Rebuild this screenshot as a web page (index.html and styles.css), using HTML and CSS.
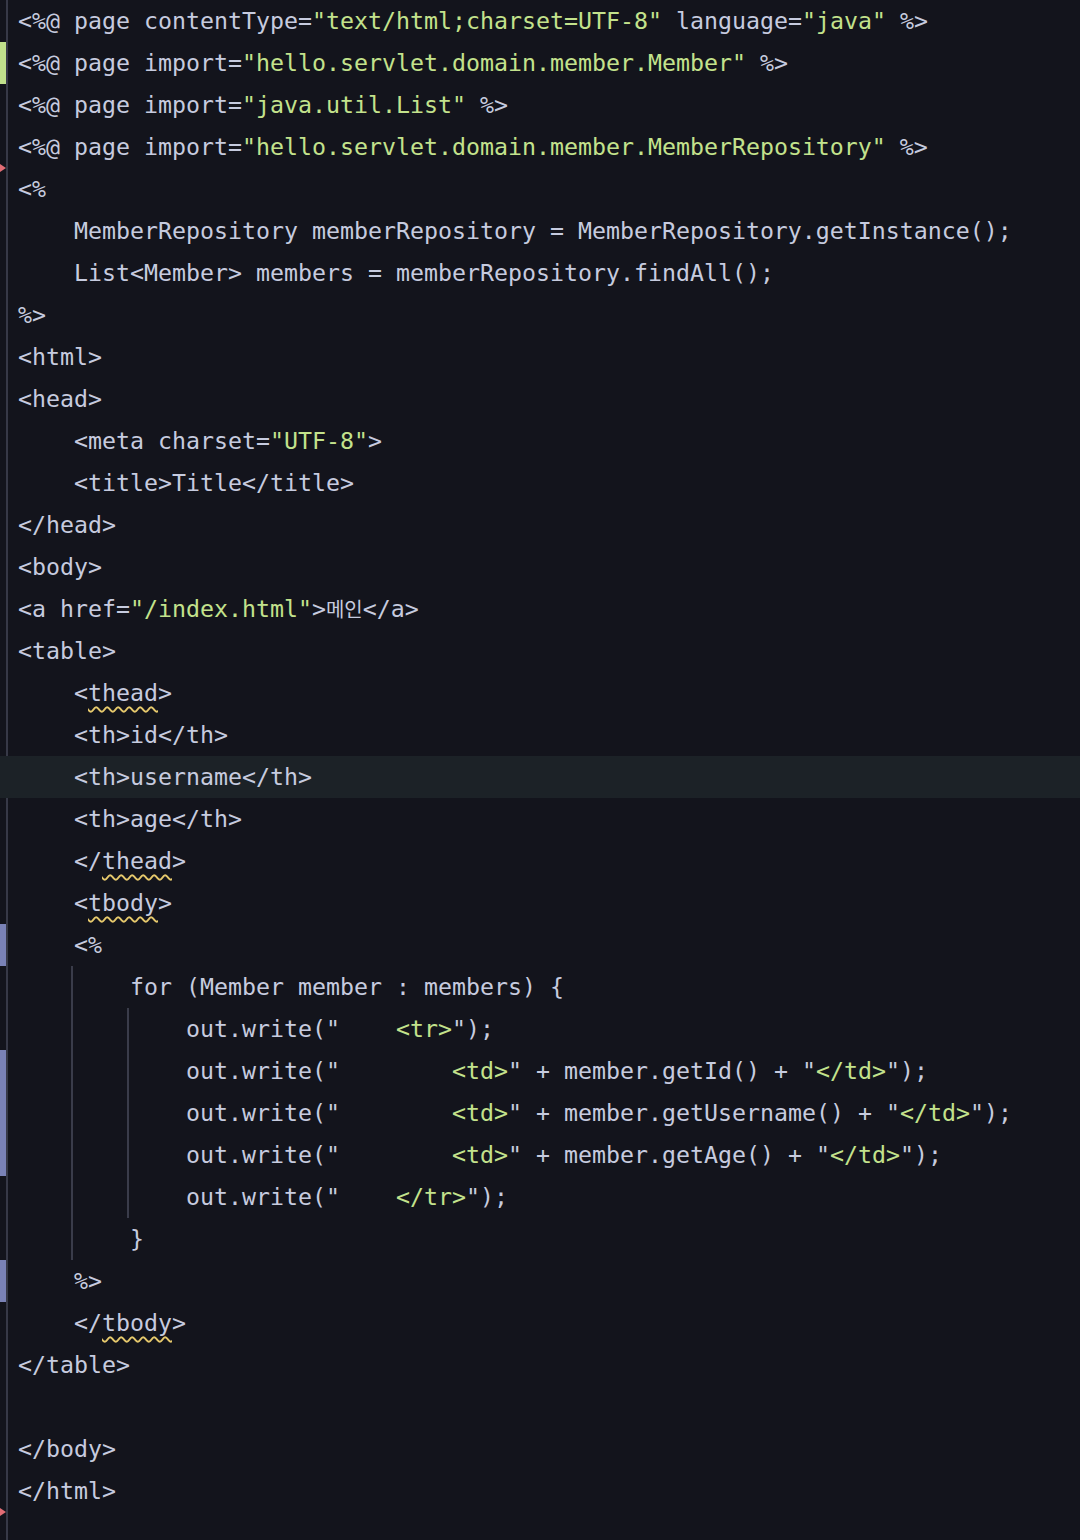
FILE: index.html
```html
<!DOCTYPE html>
<html lang="en">
<head>
<meta charset="UTF-8">
<title>JSP editor</title>
<link rel="stylesheet" href="styles.css">
</head>
<body>
<div class="editor">
<div class="line"><span class="mark"></span><span class="code">&lt;%@ page contentType=<span class="s">"text/html;charset=UTF-8"</span> language=<span class="s">"java"</span> %&gt;</span></div>
<div class="line"><span class="mark add"></span><span class="code">&lt;%@ page import=<span class="s">"hello.servlet.domain.member.Member"</span> %&gt;</span></div>
<div class="line"><span class="mark"></span><span class="code">&lt;%@ page import=<span class="s">"java.util.List"</span> %&gt;</span></div>
<div class="line"><span class="mark"></span><span class="code">&lt;%@ page import=<span class="s">"hello.servlet.domain.member.MemberRepository"</span> %&gt;</span></div>
<div class="line del"><span class="mark"></span><span class="code">&lt;%</span></div>
<div class="line"><span class="mark"></span><span class="code">    MemberRepository memberRepository = MemberRepository.getInstance();</span></div>
<div class="line"><span class="mark"></span><span class="code">    List&lt;Member&gt; members = memberRepository.findAll();</span></div>
<div class="line"><span class="mark"></span><span class="code">%&gt;</span></div>
<div class="line"><span class="mark"></span><span class="code">&lt;html&gt;</span></div>
<div class="line"><span class="mark"></span><span class="code">&lt;head&gt;</span></div>
<div class="line"><span class="mark"></span><span class="code">    &lt;meta charset=<span class="s">"UTF-8"</span>&gt;</span></div>
<div class="line"><span class="mark"></span><span class="code">    &lt;title&gt;Title&lt;/title&gt;</span></div>
<div class="line"><span class="mark"></span><span class="code">&lt;/head&gt;</span></div>
<div class="line"><span class="mark"></span><span class="code">&lt;body&gt;</span></div>
<div class="line"><span class="mark"></span><span class="code">&lt;a href=<span class="s">"/index.html"</span>&gt;<span class="ko">메인</span>&lt;/a&gt;</span></div>
<div class="line"><span class="mark"></span><span class="code">&lt;table&gt;</span></div>
<div class="line"><span class="mark"></span><span class="code">    &lt;<span class="warn">thead</span>&gt;</span></div>
<div class="line"><span class="mark"></span><span class="code">    &lt;th&gt;id&lt;/th&gt;</span></div>
<div class="line current"><span class="mark"></span><span class="code">    &lt;th&gt;username&lt;/th&gt;</span></div>
<div class="line"><span class="mark"></span><span class="code">    &lt;th&gt;age&lt;/th&gt;</span></div>
<div class="line"><span class="mark"></span><span class="code">    &lt;/<span class="warn">thead</span>&gt;</span></div>
<div class="line"><span class="mark"></span><span class="code">    &lt;<span class="warn">tbody</span>&gt;</span></div>
<div class="line"><span class="mark mod"></span><span class="code">    &lt;%</span></div>
<div class="line"><span class="mark"></span><span class="code"><span class="guide">    </span>    for (Member member : members) {</span></div>
<div class="line"><span class="mark"></span><span class="code"><span class="guide">    </span><span class="guide">    </span>    out.write("    <span class="s">&lt;tr&gt;</span>");</span></div>
<div class="line"><span class="mark mod"></span><span class="code"><span class="guide">    </span><span class="guide">    </span>    out.write("        <span class="s">&lt;td&gt;</span>" + member.getId() + "<span class="s">&lt;/td&gt;</span>");</span></div>
<div class="line"><span class="mark mod"></span><span class="code"><span class="guide">    </span><span class="guide">    </span>    out.write("        <span class="s">&lt;td&gt;</span>" + member.getUsername() + "<span class="s">&lt;/td&gt;</span>");</span></div>
<div class="line"><span class="mark mod"></span><span class="code"><span class="guide">    </span><span class="guide">    </span>    out.write("        <span class="s">&lt;td&gt;</span>" + member.getAge() + "<span class="s">&lt;/td&gt;</span>");</span></div>
<div class="line"><span class="mark"></span><span class="code"><span class="guide">    </span><span class="guide">    </span>    out.write("    <span class="s">&lt;/tr&gt;</span>");</span></div>
<div class="line"><span class="mark"></span><span class="code"><span class="guide">    </span>    }</span></div>
<div class="line"><span class="mark mod"></span><span class="code">    %&gt;</span></div>
<div class="line"><span class="mark"></span><span class="code">    &lt;/<span class="warn">tbody</span>&gt;</span></div>
<div class="line"><span class="mark"></span><span class="code">&lt;/table&gt;</span></div>
<div class="line"><span class="mark"></span><span class="code"></span></div>
<div class="line"><span class="mark"></span><span class="code">&lt;/body&gt;</span></div>
<div class="line"><span class="mark"></span><span class="code">&lt;/html&gt;</span></div>
<div class="line del"><span class="mark"></span><span class="code"></span></div>
</div>
</body>
</html>
```

FILE: styles.css
```css
html, body {
  margin: 0;
  padding: 0;
  background: #13141c;
  height: 100%;
  overflow: hidden;
}

.editor {
  font-family: "DejaVu Sans Mono", "Noto Sans CJK KR", monospace;
  font-size: 23.25px;
  color: #c6cbdf;
  min-height: 1540px;
  background: linear-gradient(to right, transparent 6px, #373947 6px, #373947 8px, transparent 8px);
}

.line {
  position: relative;
  display: flex;
  height: 42px;
  line-height: 42px;
}

.mark {
  flex: 0 0 6px;
  height: 42px;
}

.mark.add { background: #c0e08b; }
.mark.mod { background: #7a82b6; }

.line.current { background: #1c2227; }

.line.del::before {
  content: "";
  position: absolute;
  left: 0;
  top: -4px;
  border-top: 4px solid transparent;
  border-bottom: 4px solid transparent;
  border-left: 6px solid #e26d75;
}

.code {
  white-space: pre;
  padding-left: 10px;
  margin-left: 2px;
}

.s { color: #c3e28c; }

.ko {
  font-family: "Noto Sans CJK KR", sans-serif;
  font-size: 20px;
}

.warn {
  text-decoration: underline wavy #e6c96c;
  text-decoration-thickness: 1.5px;
  text-underline-offset: 5px;
}

.guide {
  display: inline-block;
  background: linear-gradient(to right, transparent 53px, #3a3c4a 53px, #3a3c4a 55px, transparent 55px);
}
```
